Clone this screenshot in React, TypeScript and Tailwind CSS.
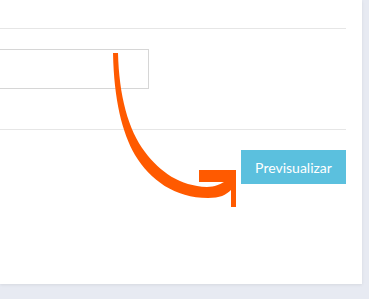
export default function App() {
  return (
    <div className="relative flex h-[299px] w-[369px] bg-[#e7eaf2]" style={{ fontFamily: '"Open Sans", "Liberation Sans", sans-serif' }}>
      <div className="h-[284px] w-[362px] bg-white pr-4 shadow-[0_1px_3px_rgba(0,0,0,0.08)]">
        <div className="h-[29px] border-b border-[#e6e6e6]" />
        <div className="h-[101px] border-b border-[#e6e6e6] pt-[20px]">
          <input className="-ml-[2px] block h-[40px] w-[151px] border border-[#d6d6d6] bg-white outline-none" />
        </div>
        <div className="flex justify-end pt-[20px]">
          <button className="h-[34px] w-[105px] bg-[#5bc0de] text-[14px] text-white" style={{ fontFamily: 'Lato, "Open Sans", sans-serif' }}>
            Previsualizar
          </button>
        </div>
      </div>
      <svg className="pointer-events-none absolute left-0 top-0" width="369" height="299" viewBox="0 0 369 299">
        <path
          fill="#ff5a00"
          d="M113,53 L118,53 C119,95 128,130 145,152 C160,172 180,186 207,187 C215,187 220,184 224,182 L199,182 L199,170 L236,170 L236,207 L231,207 L231,190 C226,195 220,198 208,198 C175,198 150,180 135,155 C122,132 114,100 113,53 Z"
        />
      </svg>
    </div>
  )
}
